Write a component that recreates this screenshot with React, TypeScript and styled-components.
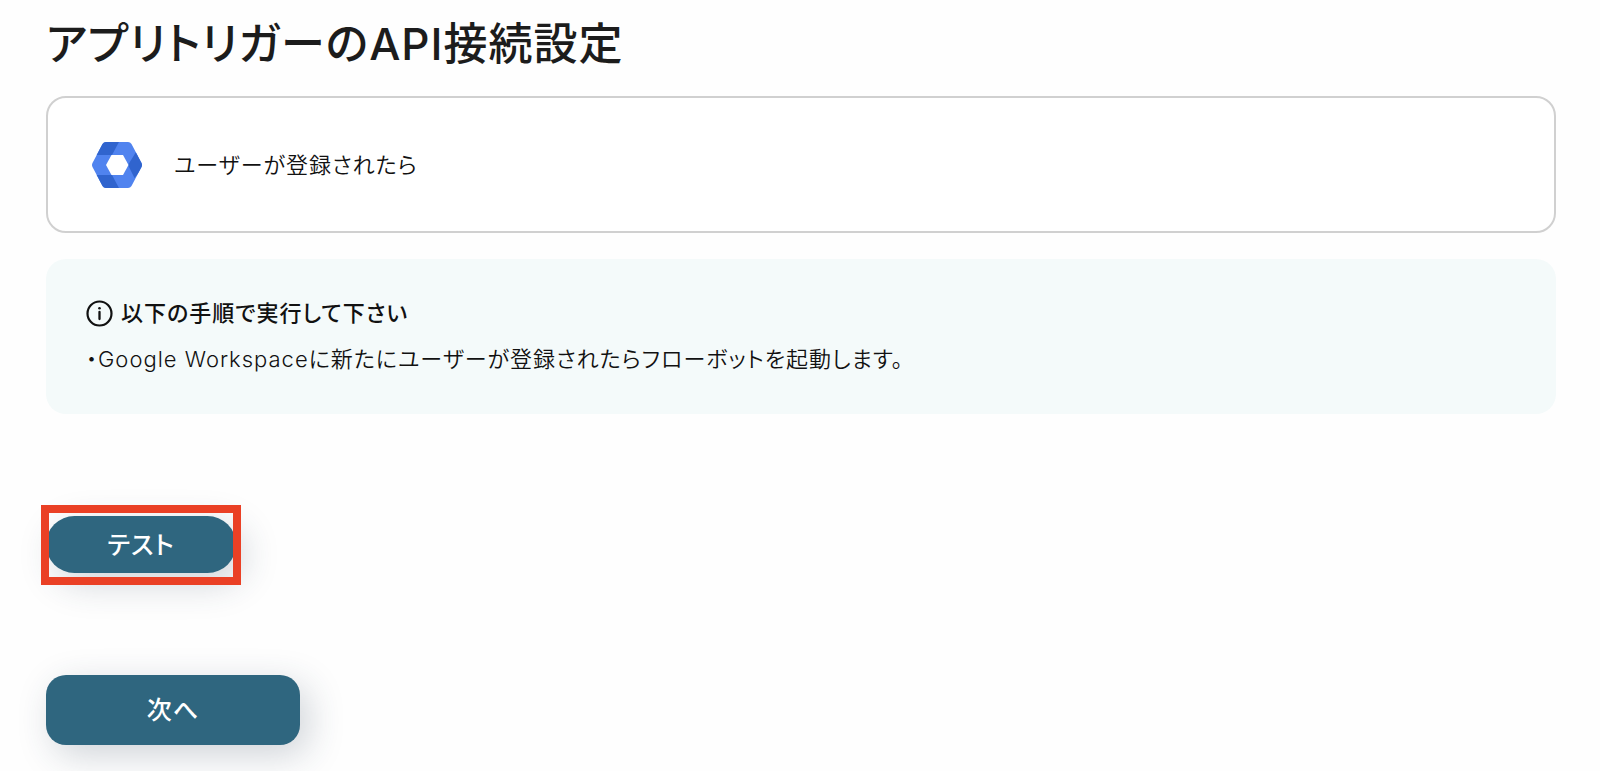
import React from "react";
import styled, { createGlobalStyle, css } from "styled-components";

const GlobalStyle = createGlobalStyle`
  *, *::before, *::after { box-sizing: border-box; }
  body {
    margin: 0;
    background: #fefefe;
    color: #111;
    font-family: Inter, "Noto Sans CJK JP", sans-serif;
    font-size: 22px;
    font-weight: 350;
    font-feature-settings: "palt";
    letter-spacing: 1px;
  }
`;

const Page = styled.main`
  display: flex;
  flex-direction: column;
  align-items: stretch;
  padding: 12px 44px 26px 46px;
`;

const Title = styled.h1`
  margin: 0 0 20px;
  font-size: 44px;
  line-height: 64px;
  font-weight: 500;
  color: #1c1c1c;
`;

const TriggerCard = styled.section`
  display: flex;
  align-items: center;
  gap: 31px;
  min-height: 137px;
  padding: 32px 43px;
  border: 2px solid #d0d0d0;
  border-radius: 20px;
  background: #fff;
`;

const TriggerName = styled.p`
  margin: 0;
  line-height: 32px;
`;

const InfoPanel = styled.section`
  display: flex;
  flex-direction: column;
  gap: 14px;
  margin-top: 26px;
  padding: 38px 40px 39px;
  border-radius: 20px;
  background: #f4fafa;
`;

const InfoHeading = styled.h2`
  display: flex;
  align-items: center;
  gap: 8px;
  margin: 0;
  font-size: 22px;
  line-height: 32px;
  font-weight: 500;
`;

const InfoText = styled.p`
  margin: 0;
  line-height: 32px;
`;

const ActionRow = styled.div`
  display: flex;
  margin-top: 102px;
`;

const Highlight = styled.div`
  position: relative;
  display: flex;

  &::after {
    content: "";
    position: absolute;
    inset: -11px -5px -12px;
    border: 8px solid #ea4025;
    pointer-events: none;
  }
`;

const Button = styled.button<{ $pill?: boolean }>`
  border: 0;
  padding: 0 24px 4px;
  background: #2f667f;
  color: #fff;
  font: inherit;
  font-size: 25px;
  font-weight: 500;
  font-feature-settings: inherit;
  letter-spacing: inherit;
  cursor: pointer;
  box-shadow: 8px 10px 36px rgba(40, 60, 80, 0.22);
  ${({ $pill }) =>
    $pill
      ? css`
          min-width: 190px;
          height: 57px;
          border-radius: 29px;
        `
      : css`
          min-width: 254px;
          height: 70px;
          border-radius: 20px;
        `}
`;

function WorkspaceLogo() {
  return (
    <svg width="52" height="48" viewBox="0 0 52 48" aria-hidden="true">
      <defs>
        <clipPath id="hexagon">
          <path d="M15 1H37Q39.300 1 40.500 3L50.500 22Q51.500 24 50.500 26L40.500 45Q39.300 47 37 47H15Q12.700 47 11.500 45L1.500 26Q.5 24 1.500 22L11.500 3Q12.700 1 15 1Z" />
        </clipPath>
      </defs>
      <g clipPath="url(#hexagon)">
        <rect width="52" height="48" fill="#5083ef" />
        <path d="M5 14H21L28.500 0H5Z" fill="#3064ce" />
        <path d="M45 11L54 24L43.500 37L37 24Z" fill="#3064ce" />
        <path d="M5 34H21L28.500 48H5Z" fill="#3064ce" />
      </g>
      <path d="M20.500 14H32L37.500 24L32 34H20.500L15 24Z" fill="#fff" />
    </svg>
  );
}

function InfoIcon() {
  return (
    <svg width="27" height="27" viewBox="0 0 27 27" fill="none" aria-hidden="true">
      <circle cx="13.500" cy="13.500" r="12" stroke="#111" strokeWidth="2.200" />
      <circle cx="13.500" cy="8.300" r="1.300" fill="#111" />
      <path d="M13.500 12V19" stroke="#111" strokeWidth="2.300" strokeLinecap="round" />
    </svg>
  );
}

export default function App() {
  return (
    <>
      <GlobalStyle />
      <Page lang="ja">
        <Title>アプリトリガーのAPI接続設定</Title>
        <TriggerCard>
          <WorkspaceLogo />
          <TriggerName>ユーザーが登録されたら</TriggerName>
        </TriggerCard>
        <InfoPanel>
          <InfoHeading>
            <InfoIcon />
            以下の手順で実行して下さい
          </InfoHeading>
          <InfoText>・Google Workspaceに新たにユーザーが登録されたらフローボットを起動します。</InfoText>
        </InfoPanel>
        <ActionRow>
          <Highlight>
            <Button type="button" $pill>テスト</Button>
          </Highlight>
        </ActionRow>
        <ActionRow>
          <Button type="button">次へ</Button>
        </ActionRow>
      </Page>
    </>
  );
}
